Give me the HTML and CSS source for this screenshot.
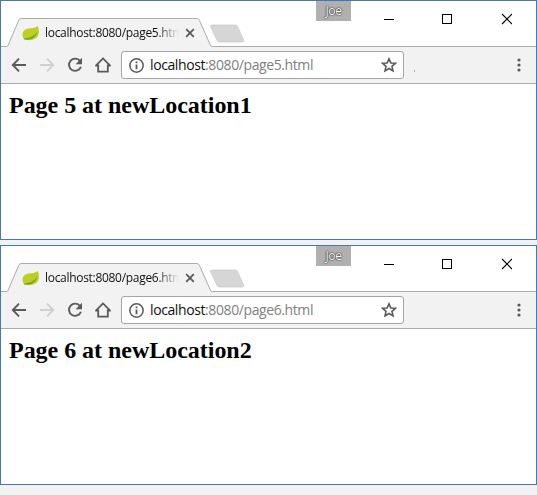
FILE: index.html
```html
<!DOCTYPE html>
<html lang="en">
<head>
<meta charset="utf-8">
<title>Page 5 and Page 6</title>
<link rel="stylesheet" href="styles.css">
</head>
<body>
<svg class="defs" aria-hidden="true">
  <symbol id="tab" viewBox="0 0 206 29"><path d="M0 28.5C1 28.5 1.200 28 1.500 27.300L12 2.500Q12.800.5 14.500.5H190.500Q192.200.5 193 2.500L203.800 27Q204.400 28.500 206 28.500V29H0Z" fill="#f2f2f2"/><path d="M0 28.500Q1.200 28.500 1.700 27L12.300 2.200Q13 .5 14.500.5H190.500Q192.200.5 193 2.500L203.800 27Q204.400 28.500 206 28.500" fill="none" stroke="#acacac"/></symbol>
  <symbol id="newtab" viewBox="0 0 36 19"><path d="M3 1H26.500Q28 1 28.600 2.400L34.700 16.300Q35.300 18 33.500 18H10.500Q8.800 18 8 16.400L1.500 2.500Q1 1 3 1Z" fill="#d6d6d6" stroke="#c9c9c9" stroke-width=".7"/></symbol>
  <symbol id="leaf" viewBox="0 0 18 16"><path d="M1.800 14C-.5 10.500.4 5.800 4 4.300C7.500 2.600 12.500 4.500 15.500.8C18 5.500 17.200 11.500 13.200 13.600C9.500 15.800 5 15.500 1.800 14Z" fill="#bfce23"/><path d="M2 13.500C7.500 13.300 12 11.500 15.300 6.500C14 12.500 8.500 15.800 2 14.300Z" fill="#6aa52f"/></symbol>
  <symbol id="x" viewBox="0 0 10 10"><path d="M1.200 1.200L8.800 8.800M8.800 1.200L1.200 8.800" stroke="#5a5a5a" stroke-width="1.800"/></symbol>
  <symbol id="back" viewBox="0 0 16 16"><path d="M15 8H2M8 1.700L1.800 8L8 14.300" fill="none" stroke="currentColor" stroke-width="1.900"/></symbol>
  <symbol id="reload" viewBox="0 0 16 16"><path d="M13.100 4.200A6.100 6.100 0 1 0 13.900 9.700" fill="none" stroke="currentColor" stroke-width="1.900"/><path d="M15 .8V7.200H8.600Z" fill="currentColor"/></symbol>
  <symbol id="home" viewBox="0 0 18 16"><path d="M1.600 8.800L9 1.400L16.400 8.800M4.200 7.500V14.600H13.800V7.500M1.300 8.700H4.200M13.800 8.700H16.700" fill="none" stroke="currentColor" stroke-width="1.800"/></symbol>
  <symbol id="info" viewBox="0 0 14 14"><circle cx="7" cy="7" r="6.200" fill="none" stroke="currentColor" stroke-width="1.400"/><path d="M7 6V10.500M7 3.300V4.900" stroke="currentColor" stroke-width="1.700"/></symbol>
  <symbol id="star" viewBox="0 0 14 14"><path d="M7 1.600L8.600 5.200L12.600 5.500L9.600 8.200L10.500 12.200L7 10.100L3.500 12.200L4.400 8.200L1.400 5.500L5.400 5.200Z" fill="none" stroke="currentColor" stroke-width="1.400"/></symbol>
  <symbol id="menu" viewBox="0 0 4 14"><g fill="currentColor"><circle cx="2" cy="2" r="1.600"/><circle cx="2" cy="7" r="1.600"/><circle cx="2" cy="12" r="1.600"/></g></symbol>
  <symbol id="controls" viewBox="0 0 128 12"><path d="M0 6.500H10M58.500 1.500H67.500V10.500H58.500Z" fill="none" stroke="#000" shape-rendering="crispEdges"/><path d="M118 1L128 11M128 1L118 11" stroke="#000" stroke-width="1.100"/></symbol>
</svg>

<section class="window">
  <header class="titlebar">
    <div class="tab">
      <svg class="tab-shape"><use href="#tab"/></svg>
      <svg class="leaf"><use href="#leaf"/></svg>
      <span class="tab-title">localhost:8080/page5.html</span>
      <svg class="tab-close"><use href="#x"/></svg>
    </div>
    <svg class="newtab"><use href="#newtab"/></svg>
    <span class="profile">Joe</span>
    <svg class="controls"><use href="#controls"/></svg>
  </header>
  <nav class="toolbar">
    <svg class="icon"><use href="#back"/></svg>
    <svg class="icon forward"><use href="#back"/></svg>
    <svg class="icon"><use href="#reload"/></svg>
    <svg class="icon home"><use href="#home"/></svg>
    <div class="address">
      <svg class="info"><use href="#info"/></svg>
      <span class="url"><b>localhost</b>:8080/page5.html</span>
      <svg class="star"><use href="#star"/></svg>
    </div>
    <i class="speck"></i>
    <svg class="menu"><use href="#menu"/></svg>
  </nav>
  <main><h1>Page 5 at newLocation1</h1></main>
</section>

<section class="window">
  <header class="titlebar">
    <div class="tab">
      <svg class="tab-shape"><use href="#tab"/></svg>
      <svg class="leaf"><use href="#leaf"/></svg>
      <span class="tab-title">localhost:8080/page6.html</span>
      <svg class="tab-close"><use href="#x"/></svg>
    </div>
    <svg class="newtab"><use href="#newtab"/></svg>
    <span class="profile">Joe</span>
    <svg class="controls"><use href="#controls"/></svg>
  </header>
  <nav class="toolbar">
    <svg class="icon"><use href="#back"/></svg>
    <svg class="icon forward"><use href="#back"/></svg>
    <svg class="icon"><use href="#reload"/></svg>
    <svg class="icon home"><use href="#home"/></svg>
    <div class="address">
      <svg class="info"><use href="#info"/></svg>
      <span class="url"><b>localhost</b>:8080/page6.html</span>
      <svg class="star"><use href="#star"/></svg>
    </div>
    <svg class="menu"><use href="#menu"/></svg>
  </nav>
  <main><h1>Page 6 at newLocation2</h1></main>
</section>
</body>
</html>
```
FILE: styles.css
```css
* { box-sizing: border-box; }
body {
  margin: 0;
  height: 495px;
  display: flex;
  flex-direction: column;
  gap: 5px;
  overflow: hidden;
  background: #f2f2f2;
  font-family: "Open Sans", "Noto Sans", sans-serif;
}
svg { display: block; flex: none; }
.defs { position: absolute; width: 0; height: 0; }
.window {
  height: 240px;
  flex: none;
  background: #fff;
  border: 1px solid #4378b5;
}
.titlebar {
  height: 46px;
  display: flex;
  align-items: flex-start;
  border-bottom: 1px solid #acacac;
}
.tab {
  position: relative;
  width: 207px;
  height: 29px;
  margin: 17px 0 0 5px;
  padding-left: 16px;
  display: flex;
  align-items: center;
  flex: none;
}
.tab-shape { position: absolute; left: 0; top: 0; width: 207px; height: 29px; }
.leaf { position: relative; width: 18px; height: 16px; margin-top: 1px; }
.tab-title {
  position: relative;
  width: 134px;
  margin-left: 5px;
  overflow: hidden;
  white-space: nowrap;
  font-size: 12px;
  line-height: 18px;
  letter-spacing: -0.3px;
  color: #111;
  -webkit-mask-image: linear-gradient(to right, #000 112px, transparent 134px);
  mask-image: linear-gradient(to right, #000 112px, transparent 134px);
}
.tab-close { position: relative; width: 10px; height: 10px; margin: 1px 0 0 6px; }
.newtab { width: 36px; height: 19px; margin: 23px 0 0 -4px; }
.profile {
  width: 35px;
  height: 20px;
  margin-left: 71px;
  flex: none;
  background: #b0b0b0;
  color: #fff;
  font-size: 12px;
  line-height: 19px;
  letter-spacing: -0.4px;
  text-align: center;
  text-shadow: 0 0 1px #222, 0 0 1px #333, 0 0 2px #555;
}
.controls { width: 128px; height: 12px; margin: 12px 0 0 33px; }
.toolbar {
  height: 37px;
  padding-left: 10px;
  display: flex;
  align-items: center;
  background: #f2f2f2;
  border-bottom: 1px solid #acacac;
  color: #5a5a5a;
}
.icon { width: 16px; height: 16px; margin-right: 12px; }
.forward { color: #d0d0d0; transform: scaleX(-1); }
.home { width: 18px; margin: 0 9px 0 -1px; }
.address {
  width: 283px;
  height: 28px;
  padding-left: 7px;
  display: flex;
  align-items: center;
  flex: none;
  background: #fff;
  border: 1px solid #a5a5a5;
  border-radius: 3px;
}
.info { width: 15px; height: 15px; }
.url {
  width: 231px;
  margin-left: 6px;
  font-size: 14px;
  line-height: 20px;
  letter-spacing: -0.4px;
  white-space: nowrap;
  color: #808080;
}
.url b { font-weight: 400; color: #111; }
.star { width: 16px; height: 16px; }
.speck { width: 1px; height: 2px; margin: 12px -11px 0 10px; background: #aaa; }
.menu { width: 4px; height: 14px; margin: 0 15px 0 auto; }
main { padding: 8px; }
h1 {
  margin: 0;
  font: bold 24px/27px "Liberation Serif", serif;
  letter-spacing: -0.03px;
  color: #000;
}
```
